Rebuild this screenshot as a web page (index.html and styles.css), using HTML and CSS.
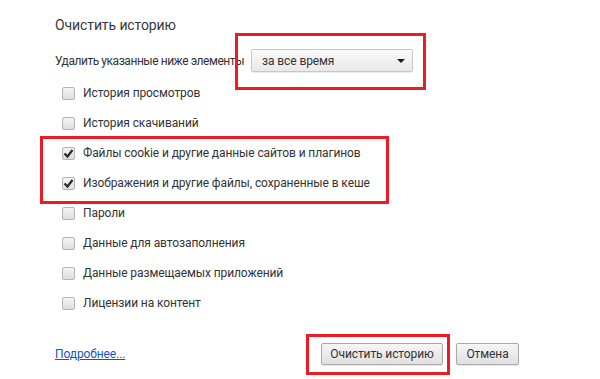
FILE: index.html
```html
<!DOCTYPE html>
<html lang="ru">
<head>
    <meta charset="UTF-8">
    <title>Очистить историю</title>
    <link rel="stylesheet" href="styles.css">
</head>
<body>
    <div class="dialog">
        <h1 class="title">Очистить историю</h1>

        <div class="period">
            <span class="period-label">Удалить указанные ниже элементы</span>
            <div class="select">
                <span>за все время</span>
                <span class="arrow"></span>
            </div>
        </div>

        <ul class="items">
            <li><span class="box"></span>История просмотров</li>
            <li><span class="box"></span>История скачиваний</li>
            <li><span class="box checked"><svg viewBox="0 0 11 11"><path d="M1.5 5.5 L4.5 8.5 L9.5 2" /></svg></span>Файлы cookie и другие данные сайтов и плагинов</li>
            <li><span class="box checked"><svg viewBox="0 0 11 11"><path d="M1.5 5.5 L4.5 8.5 L9.5 2" /></svg></span>Изображения и другие файлы, сохраненные в кеше</li>
            <li><span class="box"></span>Пароли</li>
            <li><span class="box"></span>Данные для автозаполнения</li>
            <li><span class="box"></span>Данные размещаемых приложений</li>
            <li><span class="box"></span>Лицензии на контент</li>
        </ul>

        <div class="footer">
            <a class="more" href="#">Подробнее...</a>
            <div class="buttons">
                <button class="btn btn-clear">Очистить историю</button>
                <button class="btn btn-cancel">Отмена</button>
            </div>
        </div>

        <!-- red annotation frames -->
        <div class="mark mark-period"></div>
        <div class="mark mark-items"></div>
        <div class="mark mark-button"></div>
    </div>
</body>
</html>
```

FILE: styles.css
```css
* {
    margin: 0;
    padding: 0;
    box-sizing: border-box;
}

body {
    font-family: Roboto, 'Noto Sans', sans-serif;
    font-size: 12px;
    letter-spacing: -0.1px;
    color: #333;
    background: #fff;
}

.dialog {
    position: relative;
    width: 600px;
    height: 379px;
    padding: 16px 81px 0 55px;
}

.title {
    font-size: 14px;
    font-weight: normal;
    color: #383838;
    line-height: 18px;
}

.period {
    display: flex;
    align-items: center;
    gap: 5px;
    margin-top: 15px;
    height: 23px;
}

.period-label {
    width: 191px;
    white-space: nowrap;
    letter-spacing: -0.45px;
}

.select {
    display: flex;
    align-items: center;
    justify-content: space-between;
    width: 162px;
    height: 23px;
    padding: 0 7px 0 10px;
    border: 1px solid #c8c8c8;
    border-radius: 2px;
    background: linear-gradient(#fafafa, #e9e9e9);
    box-shadow: 0 1px 1px rgba(0, 0, 0, 0.08);
}

.arrow {
    width: 0;
    height: 0;
    margin-top: 1px;
    border-left: 4px solid transparent;
    border-right: 4px solid transparent;
    border-top: 4px solid #1a1a1a;
}

.items {
    list-style: none;
    margin-top: 6px;
    padding-left: 7px;
}

.items li {
    display: flex;
    align-items: center;
    height: 30px;
}

.box {
    width: 13px;
    height: 13px;
    margin-right: 8px;
    border: 1px solid #b4b4b4;
    border-radius: 2px;
    background: linear-gradient(#f4f4f4, #dedede);
}

.box svg {
    display: block;
    width: 11px;
    height: 11px;
}

.box path {
    fill: none;
    stroke: #2a2a2a;
    stroke-width: 2.2;
}

.footer {
    display: flex;
    align-items: center;
    justify-content: space-between;
    margin-top: 25px;
}

.more {
    color: #15c;
    text-decoration: underline;
}

.buttons {
    display: flex;
    gap: 13px;
}

.btn {
    font-family: inherit;
    font-size: 12px;
    letter-spacing: inherit;
    color: #333;
    height: 22px;
    white-space: nowrap;
    border: 1px solid #a8a8a8;
    border-radius: 2px;
    background: linear-gradient(#f6f6f6, #e0e0e0);
    box-shadow: 0 1px 1px rgba(0, 0, 0, 0.1);
}

.btn-clear {
    width: 122px;
}

.btn-cancel {
    width: 63px;
}

.mark {
    position: absolute;
    border: 3px solid #ed1c24;
}

.mark-period {
    left: 235px;
    top: 33px;
    width: 191px;
    height: 57px;
}

.mark-items {
    left: 40px;
    top: 136px;
    width: 349px;
    height: 68px;
}

.mark-button {
    left: 306px;
    top: 334px;
    width: 144px;
    height: 41px;
}
```
